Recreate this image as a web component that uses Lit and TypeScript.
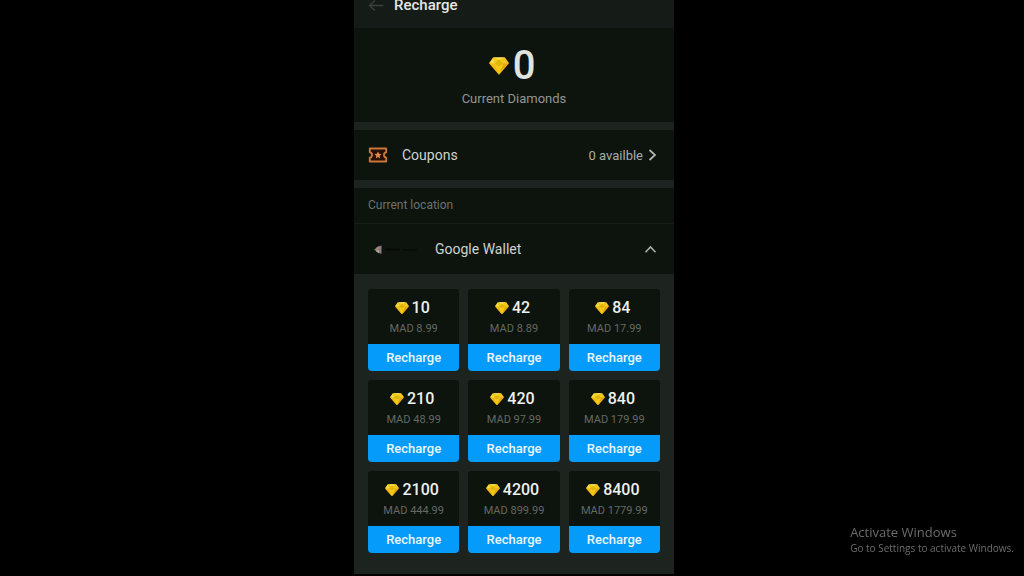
import { LitElement, html, css, svg } from "lit";
import { customElement, property } from "lit/decorators.js";

interface Pack {
  amount: number;
  price: string;
}

const PACKS: Pack[] = [
  { amount: 10, price: "8.99" },
  { amount: 42, price: "8.89" },
  { amount: 84, price: "17.99" },
  { amount: 210, price: "48.99" },
  { amount: 420, price: "97.99" },
  { amount: 840, price: "179.99" },
  { amount: 2100, price: "444.99" },
  { amount: 4200, price: "899.99" },
  { amount: 8400, price: "1779.99" },
];

@customElement("diamond-icon")
export class DiamondIcon extends LitElement {
  static styles = css`
    :host { display: inline-flex; width: 14px; }
    .gem { display: block; width: 100%; }
  `;
  render() {
    return html`<svg class="gem" viewBox="0 0 20 18" aria-hidden="true">
      ${svg`
        <path d="M4.3 0.4H15.7L19.8 6.2L10 17.6L0.2 6.2Z" fill="#f3cb13" stroke="#c9920c" stroke-width=".5" stroke-linejoin="round"/>
        <path d="M4.3 .5L5.6 6.4L.4 6.2Z" fill="#f6dc4c"/>
        <path d="M15.7 .5L14.4 6.4L19.6 6.2Z" fill="#f0c42a"/>
        <path d="M4.3 .5H15.7L10 2.6Z" fill="#fae468"/>
        <path d="M10 2.4L14.4 6.6L10 9.4L5.6 6.6Z" fill="#dfb60c"/>
        <path d="M.4 6.3L5.6 6.6L10 17.4Z" fill="#f2b91a"/>
        <path d="M19.6 6.3L14.4 6.6L10 17.4Z" fill="#e9a616"/>
      `}
    </svg>`;
  }
}

@customElement("pack-card")
export class PackCard extends LitElement {
  @property({ type: Number }) amount = 0;
  @property() price = "";

  static styles = css`
    :host { display: flex; flex-direction: column; min-width: 0; }
    .info {
      box-sizing: border-box;
      height: 55px;
      padding-top: 9px;
      background: #0d130d;
      border-radius: 3px 3px 0 0;
      text-align: center;
    }
    .amount {
      display: flex;
      align-items: center;
      justify-content: center;
      gap: 3px;
      padding-right: 3px;
      color: #eef1ee;
      font-size: 16px;
      font-weight: 500;
      line-height: 20px;
    }
    .price { color: #646964; font-size: 11px; line-height: 22px; }
    .buy {
      height: 27px;
      padding: 0;
      border: 0;
      border-radius: 0 0 4px 4px;
      background: #059bfb;
      color: #e9f6fd;
      font: 500 13px/26px Roboto, sans-serif;
      cursor: pointer;
    }
  `;
  render() {
    return html`
      <div class="info">
        <div class="amount"><diamond-icon></diamond-icon><span>${this.amount}</span></div>
        <div class="price">MAD ${this.price}</div>
      </div>
      <button class="buy" type="button">Recharge</button>
    `;
  }
}

@customElement("app-root")
export class AppRoot extends LitElement {
  static styles = css`
    :host {
      display: grid;
      grid-template-columns: 354fr minmax(320px, 320fr) 350fr;
      align-items: start;
      min-height: 100vh;
      overflow: hidden;
      background: #000;
      font-family: Roboto, sans-serif;
    }
    .screen { grid-column: 2; background: #1d231e; }
    .bar {
      display: flex;
      align-items: flex-start;
      gap: 10px;
      box-sizing: border-box;
      height: 28px;
      padding: 0 14px;
      background: #151b16;
    }
    .back { display: flex; padding: 0; border: 0; background: none; cursor: pointer; }
    .title { margin: 0; color: #e4e8e4; font-size: 15px; font-weight: 500; line-height: 11px; }
    .balance {
      box-sizing: border-box;
      height: 94px;
      padding-top: 17px;
      background: #0d130d;
      text-align: center;
    }
    .total {
      display: flex;
      align-items: center;
      justify-content: center;
      gap: 4px;
      padding-right: 4px;
      color: #e0e4e0;
      font-size: 40px;
      font-weight: 500;
      line-height: 42px;
    }
    .large { width: 20px; }
    .caption { color: #929792; font-size: 13px; line-height: 24px; }
    .row {
      display: flex;
      align-items: center;
      box-sizing: border-box;
      height: 50px;
      padding: 0 17px 0 14px;
      background: #0d130d;
      color: #cfd3cf;
      font-size: 14px;
      text-decoration: none;
    }
    .coupons { margin: 8px 0; gap: 14px; }
    .grow { flex: 1; }
    .available { display: flex; align-items: center; gap: 5px; color: #a9aea9; font-size: 13px; }
    .location {
      padding: 0 14px;
      border-bottom: 1px solid #171d18;
      background: #0d130d;
      color: #6c726c;
      font-size: 12px;
      line-height: 35px;
    }
    .wallet {
      width: 100%;
      gap: 14px;
      border: 0;
      font-family: inherit;
      text-align: left;
      cursor: pointer;
    }
    .packs {
      display: grid;
      grid-template-columns: repeat(3, 1fr);
      gap: 9px;
      padding: 15px 14px 21px;
    }
    .notice {
      position: fixed;
      right: 10px;
      bottom: 21px;
      color: #6c6c6c;
      font-family: "Open Sans", "Noto Sans", sans-serif;
      font-size: 10px;
      line-height: 14px;
    }
    .notice-title { font-size: 13px; line-height: 18px; }
    .icon { display: block; flex: none; }
  `;

  render() {
    return html`
      <main class="screen">
        <header class="bar">
          <button class="back" type="button" aria-label="Back">
            <svg class="icon" width="16" height="12" viewBox="0 1 16 12" fill="none" stroke="#3b413c" stroke-width="1.3">
              <path d="M7 1.5L1.5 6.5L7 11.5M1.5 6.5H15.5" />
            </svg>
          </button>
          <h1 class="title">Recharge</h1>
        </header>
        <section class="balance">
          <div class="total"><diamond-icon class="large"></diamond-icon><span>0</span></div>
          <div class="caption">Current Diamonds</div>
        </section>
        <a class="row coupons" href="#coupons">
          <svg class="icon" width="20" height="16" viewBox="0 0 20 16">
            <path d="M1.8 1.5H18.2V5.3Q16 5.8 16 8Q16 10.2 18.2 10.7V14.5H1.8V10.7Q4 10.2 4 8Q4 5.8 1.8 5.3Z" fill="#240f04" stroke="#c9783a" stroke-width="1.9" stroke-linejoin="round" />
            <path d="M10 4.5L11.1 6.8L13.6 7.1L11.7 8.8L12.2 11.4L10 10L7.8 11.4L8.3 8.8L6.4 7.1L8.9 6.8Z" fill="#e58a45" />
          </svg>
          <span class="grow">Coupons</span>
          <span class="available">0 availble
            <svg class="icon" width="9" height="12" viewBox="0 0 9 12" fill="none" stroke="#b4b9b4" stroke-width="1.7">
              <path d="M1.5 1L7 6L1.5 11" />
            </svg>
          </span>
        </a>
        <div class="location">Current location</div>
        <button class="row wallet" type="button" aria-expanded="true">
          <svg class="icon" width="53" height="12" viewBox="0 0 53 12">
            <path d="M6 6.5L9 4.5V8.8Z" fill="#4f9a62" />
            <path d="M8.2 4.8L11 3V6.5H8.4Z" fill="#bd7d86" />
            <path d="M8.4 6.5H11V10.5L8.2 8.6Z" fill="#b4a37d" />
            <path d="M11 3.2L13.5 2.5V11L11 10Z" fill="#83798f" />
            <path d="M17 6.5H32M35 7H49" stroke="#080c08" stroke-width="2" />
          </svg>
          <span class="grow">Google Wallet</span>
          <svg class="icon" width="13" height="9" viewBox="0 0 13 9" fill="none" stroke="#a9aea9" stroke-width="1.6">
            <path d="M1.5 7.2L6.5 2L11.5 7.2" />
          </svg>
        </button>
        <section class="packs">
          ${PACKS.map((p) => html`<pack-card .amount=${p.amount} .price=${p.price}></pack-card>`)}
        </section>
      </main>
      <aside class="notice">
        <div class="notice-title">Activate Windows</div>
        <div>Go to Settings to activate Windows.</div>
      </aside>
    `;
  }
}
